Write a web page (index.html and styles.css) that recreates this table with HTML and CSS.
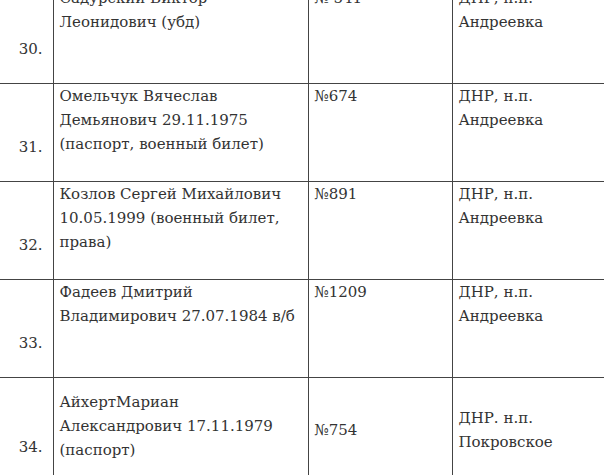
FILE: index.html
```html
<!DOCTYPE html>
<html lang="ru">
<head>
<meta charset="utf-8">
<title>Список</title>
<link rel="stylesheet" href="styles.css">
</head>
<body>
<div class="wrap">
<table class="list">
  <colgroup>
    <col class="c-num">
    <col class="c-name">
    <col class="c-doc">
    <col class="c-place">
  </colgroup>
  <tbody>
    <tr class="row">
      <td class="num">30.</td>
      <td class="cell">Садурский Виктор<br>Леонидович (убд)</td>
      <td class="cell">№ 541</td>
      <td class="cell">ДНР, н.п.<br>Андреевка</td>
    </tr>
    <tr class="row">
      <td class="num">31.</td>
      <td class="cell">Омельчук Вячеслав<br>Демьянович 29.11.1975<br>(паспорт, военный билет)</td>
      <td class="cell">№674</td>
      <td class="cell">ДНР, н.п.<br>Андреевка</td>
    </tr>
    <tr class="row">
      <td class="num">32.</td>
      <td class="cell">Козлов Сергей Михайлович<br>10.05.1999 (военный билет,<br>права)</td>
      <td class="cell">№891</td>
      <td class="cell">ДНР, н.п.<br>Андреевка</td>
    </tr>
    <tr class="row">
      <td class="num">33.</td>
      <td class="cell">Фадеев Дмитрий<br>Владимирович 27.07.1984 в/б</td>
      <td class="cell">№1209</td>
      <td class="cell">ДНР, н.п.<br>Андреевка</td>
    </tr>
    <tr class="row row-last">
      <td class="num">34.</td>
      <td class="cell cell-mid cell-name">АйхертМариан<br>Александрович 17.11.1979<br>(паспорт)</td>
      <td class="cell cell-mid">№754</td>
      <td class="cell cell-mid">ДНР. н.п.<br>Покровское</td>
    </tr>
  </tbody>
</table>
</div>
</body>
</html>
```

FILE: styles.css
```css
html, body {
  margin: 0;
  padding: 0;
  background: #ffffff;
  overflow: hidden;
}

.wrap {
  width: 604px;
  height: 475px;
  overflow: hidden;
}

.list {
  border-collapse: collapse;
  table-layout: fixed;
  width: 760px;
  margin-top: -15px;
  font-family: "DejaVu Serif", "Liberation Serif", serif;
  font-size: 15px;
  line-height: 24px;
  color: #333333;
}

.c-num { width: 53px; }
.c-name { width: 255px; }
.c-doc { width: 144px; }
.c-place { width: 308px; }

.row { height: 98px; }
.row-last { height: 104px; }

.list td {
  border: 1px solid #444444;
  padding: 0 4px 0 6px;
  vertical-align: top;
}

.list td.num {
  border-left: none;
  text-align: right;
  vertical-align: bottom;
  padding: 0 10px 22px 0;
}

.list td.cell-mid {
  vertical-align: middle;
}

.list td.cell-name {
  padding-bottom: 8px;
}
```
